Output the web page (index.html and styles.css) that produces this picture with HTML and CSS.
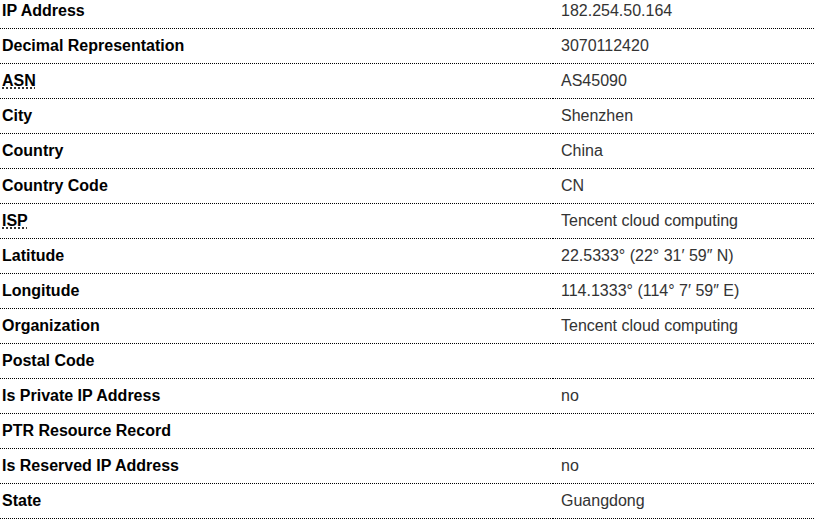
FILE: index.html
```html
<!DOCTYPE html>
<html>
<head>
<meta charset="utf-8">
<link rel="stylesheet" href="styles.css">
</head>
<body>
<table class="info">
<tbody>
<tr><th>IP Address</th><td>182.254.50.164</td></tr>
<tr><th>Decimal Representation</th><td>3070112420</td></tr>
<tr><th><abbr title="Autonomous System Number">ASN</abbr></th><td>AS45090</td></tr>
<tr><th>City</th><td>Shenzhen</td></tr>
<tr><th>Country</th><td>China</td></tr>
<tr><th>Country Code</th><td>CN</td></tr>
<tr><th><abbr title="Internet Service Provider">ISP</abbr></th><td>Tencent cloud computing</td></tr>
<tr><th>Latitude</th><td>22.5333° (22° 31′ 59″ N)</td></tr>
<tr><th>Longitude</th><td>114.1333° (114° 7′ 59″ E)</td></tr>
<tr><th>Organization</th><td>Tencent cloud computing</td></tr>
<tr><th>Postal Code</th><td></td></tr>
<tr><th>Is Private IP Address</th><td>no</td></tr>
<tr><th>PTR Resource Record</th><td></td></tr>
<tr><th>Is Reserved IP Address</th><td>no</td></tr>
<tr><th>State</th><td>Guangdong</td></tr>
</tbody>
</table>
</body>
</html>
```
FILE: styles.css
```css
html, body {
  margin: 0;
  padding: 0;
  background: #fff;
  overflow: hidden;
}
body {
  font-family: "Liberation Sans", Arial, sans-serif;
  font-size: 16px;
  color: #000;
}
.info {
  border-collapse: collapse;
  margin-top: -6px;
  margin-left: -6px;
  width: 840px;
}
.info th,
.info td {
  padding: 8px 8px;
  height: 18px;
  line-height: 18px;
  border-bottom: 1px dotted #000;
  vertical-align: top;
  text-align: left;
}
.info th {
  width: 543px;
  font-weight: bold;
  color: #000;
}
.info td {
  color: #333;
}
.info abbr {
  text-decoration: underline dotted;
  text-underline-offset: 2px;
  cursor: help;
}
```
